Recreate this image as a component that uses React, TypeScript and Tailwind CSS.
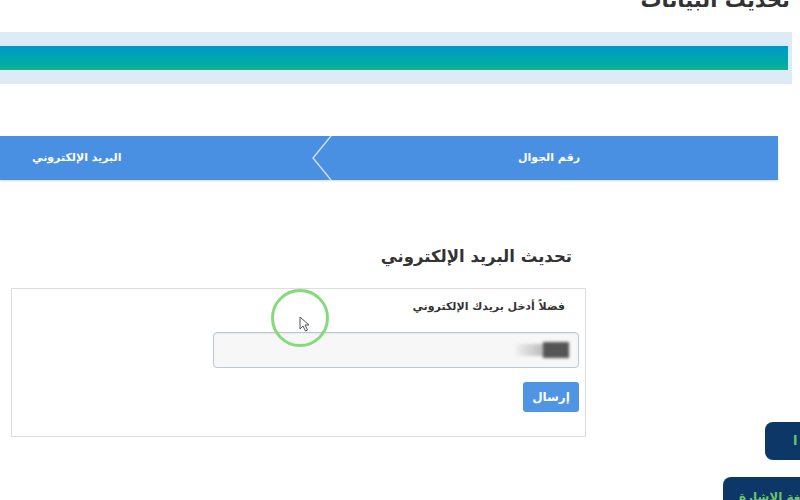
const FONT = "font-['DejaVu_Sans','Noto_Sans',sans-serif]";

function Stepper() {
  return (
    <div className="relative mr-[22px] flex h-[44px] bg-[#4a90e2] shadow-[0_1px_2px_rgba(0,0,0,0.15)]">
      <div className="flex w-[458px] items-center justify-center text-[11px] font-bold text-white">رقم الجوال</div>
      <div className="flex flex-1 items-center justify-end pl-[32px] text-[11px] font-bold text-white">البريد الإلكتروني</div>
      <svg className="absolute left-[310px] top-0 h-[44px] w-[24px]" viewBox="0 0 24 44" fill="none">
        <path d="M21 0 L3 22 L21 44" stroke="#cfe4fb" strokeWidth="1.4" />
      </svg>
    </div>
  );
}

function EmailForm() {
  return (
    <div className="mr-[214px] w-[575px]">
      <h2 className="mr-[14px] text-[16.5px] font-semibold leading-[26px] text-[#333]">تحديث البريد الإلكتروني</h2>
      <div className="mt-[18px] h-[149px] border border-[#dddddd] pt-[9px] pr-[6px]">
        <p className="mr-[14px] text-[11px] font-bold leading-[18px] text-[#333]">فضلاً أدخل بريدك الإلكتروني</p>
        <div className="mt-[16px] flex h-[36px] w-[366px] items-center rounded-[4px] border border-[#b9c7d6] bg-[#f7f7f7] px-[9px] shadow-[inset_0_1px_1px_rgba(0,0,0,0.06)]">
          <div className="flex items-center blur-[1.5px]">
            <div className="h-[16px] w-[26px] bg-[#555]" />
            <div className="h-[12px] w-[28px] bg-gradient-to-l from-[#bbb] to-[#f2f2f2]" />
          </div>
        </div>
        <button className="mt-[14px] h-[30px] w-[56px] rounded-[3px] bg-[#4f95e3] text-[12px] font-bold text-white">إرسال</button>
      </div>
    </div>
  );
}

export default function App() {
  return (
    <div dir="rtl" className={`relative h-[500px] w-[800px] overflow-hidden bg-white ${FONT}`}>
      <h1 className="mr-[10px] mt-[-13px] text-[21px] font-bold leading-[26px] text-[#333]">تحديث البيانات</h1>

      <div className="mr-[8px] mt-[19px] flex h-[52px] items-center bg-[#dcebf6] pr-[4px]">
        <div className="h-[24px] w-full bg-gradient-to-b from-[#0096cc] to-[#10b38e]" />
      </div>

      <div className="mt-[52px]">
        <Stepper />
      </div>

      <div className="mt-[64px]">
        <EmailForm />
      </div>

      {/* click highlight */}
      <div className="absolute left-[271px] top-[289px] h-[58px] w-[58px] rounded-full border-[3px] border-[#86d97c]" />
      <svg className="absolute left-[299px] top-[316px] h-[16px] w-[12px]" viewBox="0 0 12 16">
        <path d="M1 1 L1 13 L4 10 L6.5 15 L8.5 14 L6 9 L10 9 Z" fill="#fff" stroke="#555" strokeWidth="1" />
      </svg>

      {/* floating buttons */}
      <div className="absolute left-[765px] top-[422px] flex h-[38px] w-[60px] items-center justify-end rounded-[8px] bg-[#0c3766] pl-[28px] text-[13px] font-bold text-[#6cc36a]">ا</div>
      <div className="absolute left-[723px] top-[477px] flex h-[34px] w-[90px] items-center justify-start rounded-[8px] bg-[#0c3766] pr-[8px] pt-[6px] text-[12px] font-bold text-[#6cc36a]">لغة الاشارة</div>
    </div>
  );
}
